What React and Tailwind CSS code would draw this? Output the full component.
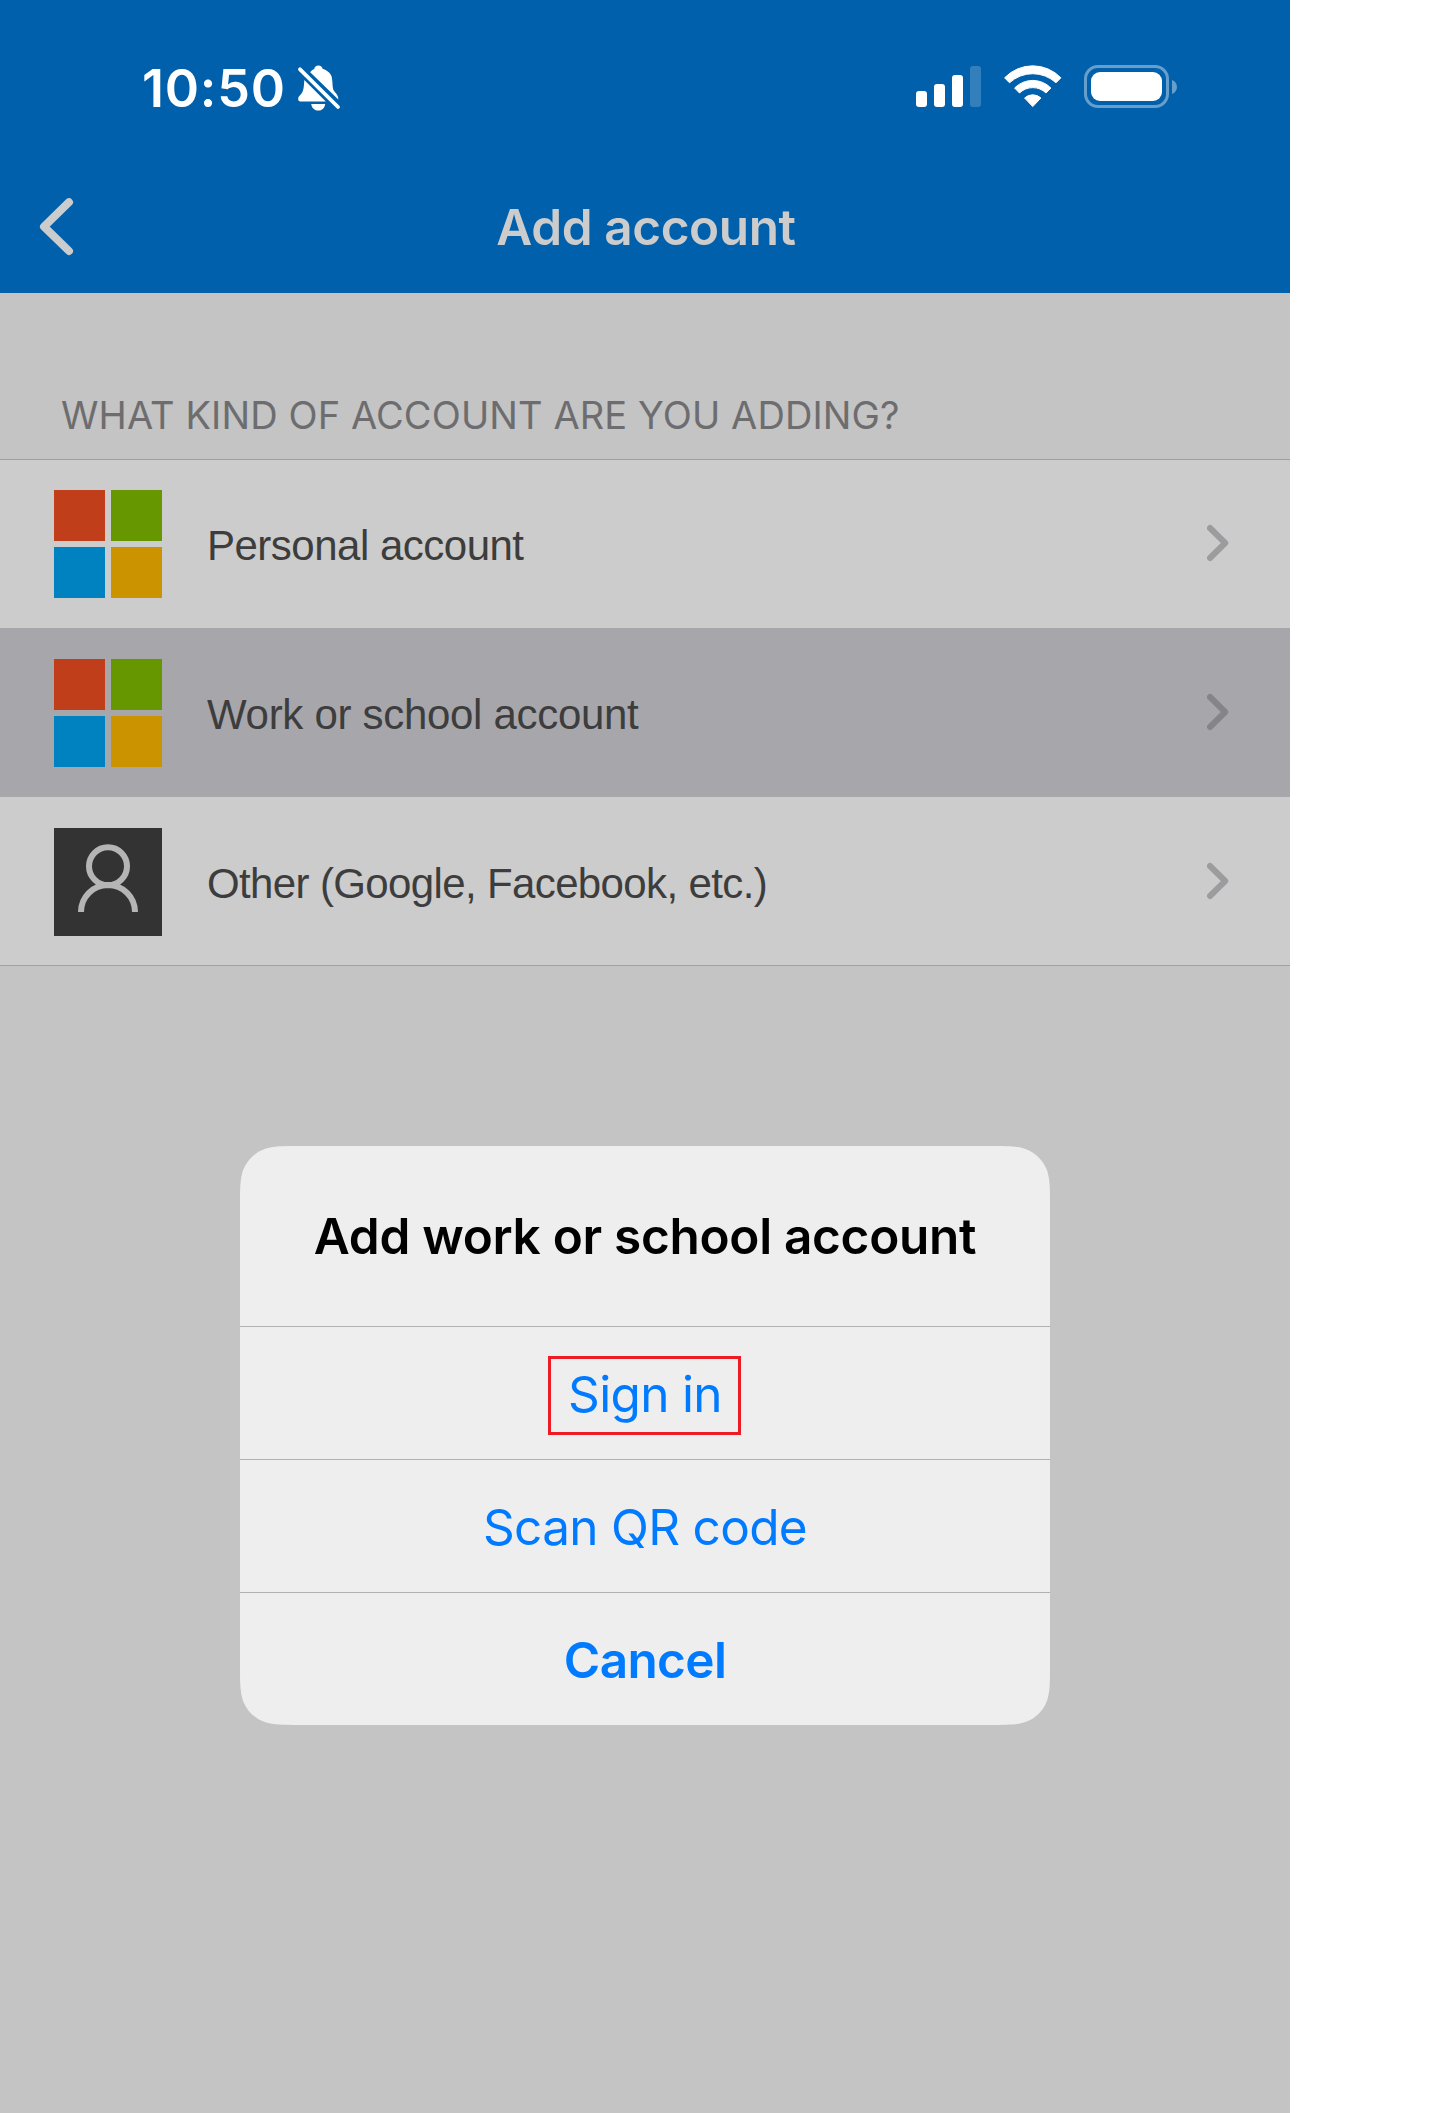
import React from "react";

const SILENT_BELL = (
  <svg className="ml-[11px] h-12 w-11" viewBox="0 0 44 48" fill="#fff">
    <path d="M13.2 8.2C14.4 6.6 15.8 5.6 17.3 5C17.5 2.8 19.1 1.4 21.4 1.4C23.7 1.4 25.3 2.8 25.6 4.8C29.3 6 32.2 8.1 33.8 10.8C35.7 14 35.2 19.5 36 24.5C36.6 28.5 41.6 29.6 41.3 35.6Z" />
    <path d="M7.3 16L28.8 37.6H3.4C1.9 37.6 1.2 36.6 1.2 35.1C1.2 31.6 4.6 31.2 6 26.6C7.1 23 7 19.6 7.3 16Z" />
    <path d="M14.2 40H28.2C27.6 44.2 25 46.6 21.3 46.6C17.5 46.6 14.8 44.2 14.2 40Z" />
    <path d="M3 5.3L41 43" stroke="#fff" strokeWidth="3.8" strokeLinecap="round" />
  </svg>
);

const WIFI = (
  <svg className="ml-[23px] h-[43px] w-[58px]" viewBox="0 0 58 43" fill="#fff">
    <g stroke="#fff" strokeWidth="1" strokeLinejoin="round">
      <path d="M.6 12.8A39.1 39.1 0 0 1 56.9 12.8L52 17.8A34.3 34.3 0 0 0 5.5 17.8Z" />
      <path d="M10.6 23A25.5 25.5 0 0 1 46.9 23L42 28A19 19 0 0 0 15.5 28Z" />
      <path d="M20.6 33A12 12 0 0 1 36.9 33L28.75 41.6Z" />
    </g>
  </svg>
);

function StatusBar() {
  return (
    <div className="flex h-[176px] items-center pr-[113px] pl-[142px] text-white">
      <span className="mt-[2px] font-['Inter',sans-serif] text-[52px] leading-[60px] font-semibold tracking-[0.78px]">10:50</span>
      {SILENT_BELL}
      <div className="mb-[3px] ml-auto flex h-[43px] items-start">
        <div className="flex h-[42px] items-end gap-[7px]">
          <div className="h-4 w-[11px] rounded-[3px] bg-white" />
          <div className="h-[23px] w-[11px] rounded-[3px] bg-white" />
          <div className="h-8 w-[11px] rounded-[3px] bg-white" />
          <div className="h-[41px] w-[11px] rounded-[3px] bg-white/20" />
        </div>
        {WIFI}
        <div className="ml-[22px] flex h-[43px] items-center gap-[3px]">
          <div className="h-[43px] w-[85px] rounded-[14px] border-3 border-white/40 p-1">
            <div className="h-full w-full rounded-[9px] bg-white" />
          </div>
          <svg className="h-[14px] w-[5px]" viewBox="0 0 5 14">
            <path d="M0 0C3 1 5 4 5 7S3 13 0 14Z" fill="#fff" fillOpacity=".4" />
          </svg>
        </div>
      </div>
    </div>
  );
}

function NavBar() {
  return (
    <div className="mb-[15px] grid h-[102px] grid-cols-[1fr_auto_1fr] items-center">
      <svg className="ml-9 h-[60px] w-10" viewBox="0 0 40 60" fill="none" stroke="#cccccc" strokeWidth="8" strokeLinecap="round" strokeLinejoin="round">
        <path d="M33 5.2L8 29.6L33 54" />
      </svg>
      <h1 className="ml-[2px] font-['Inter',sans-serif] text-[49.5px] leading-[60px] font-semibold tracking-[-0.41px] text-[#cccccc]">Add account</h1>
    </div>
  );
}

function MicrosoftLogo() {
  return (
    <div className="grid size-[108px] shrink-0 grid-cols-2 gap-[6px]">
      <div className="bg-[#c13e1b]" />
      <div className="bg-[#669600]" />
      <div className="bg-[#0082c1]" />
      <div className="bg-[#cc9300]" />
    </div>
  );
}

function PersonTile() {
  return (
    <svg className="size-[108px] shrink-0 bg-[#333333]" viewBox="0 0 108 108" fill="none" stroke="#b5b5b5" strokeWidth="6">
      <path d="M73 38.2A19 19 0 1 1 35 38.2A19 19 0 1 1 73 38.2ZM27 84A27 27 0 0 1 81 84" />
    </svg>
  );
}

function Row({ className, icon, labelClass, chevron, children }) {
  return (
    <div className={"flex items-center pr-[59px] pl-[54px] " + className}>
      {icon}
      <span className={"mt-[3px] ml-[45px] font-['Liberation_Sans',sans-serif] text-[42px] leading-[50px] text-[#3d3d3d] " + labelClass}>{children}</span>
      <svg className="mb-[2px] ml-auto h-10 w-6" viewBox="0 0 24 40" fill="none" stroke={chevron} strokeWidth="6" strokeLinecap="round" strokeLinejoin="round">
        <path d="M3 5L18.2 20L3 35" />
      </svg>
    </div>
  );
}

function Alert() {
  const action = "flex h-[133px] items-center justify-center border-t border-[#b0b0b0] pt-[2px] text-[#007aff]";
  return (
    <div
      className="mx-auto mt-[180px] h-[579px] w-[810px] bg-[#eeeeee] font-['Inter',sans-serif] text-[49.5px] leading-[60px] [clip-path:path('M59.6_0H750.4C767.5_0_776.1_0_785.4_2.9C795.5_6.6_803.4_14.5_807.1_24.6C810_33.9_810_42.5_810_59.6V519.4C810_536.5_810_545.1_807.1_554.4C803.4_564.5_795.5_572.4_785.4_576.1C776.1_579_767.5_579_750.4_579H59.6C42.5_579_33.9_579_24.6_576.1C14.5_572.4_6.6_564.5_2.9_554.4C0_545.1_0_536.5_0_519.4V59.6C0_42.5_0_33.9_2.9_24.6C6.6_14.5_14.5_6.6_24.6_2.9C33.9_0_42.5_0_59.6_0Z')]"
    >
      <h2 className="flex h-[180px] items-center justify-center font-semibold tracking-[-0.3px] text-black">Add work or school account</h2>
      <div className={action + " tracking-[-0.67px]"}>
        <span className="mt-[3px] mr-px flex h-[79px] w-[193px] items-center justify-center border-3 border-[#ed1c24] pb-[3px] pl-px">Sign in</span>
      </div>
      <div className={action + " tracking-[-0.69px]"}>Scan QR code</div>
      <div className={action + " font-semibold tracking-[-0.64px]"}>Cancel</div>
    </div>
  );
}

export default function App() {
  return (
    <div className="h-[2113px] w-full bg-white">
      <div className="flex h-full w-[1290px] flex-col bg-[#c4c4c4]">
        <header className="h-[293px] bg-[#0060ab]">
          <StatusBar />
          <NavBar />
        </header>
        <div className="flex h-[166px] items-end pb-5 pl-[61px] font-['Inter',sans-serif] text-[38px] leading-[48px] tracking-[0.11px] whitespace-nowrap text-[#6d6d6f]">
          WHAT KIND OF ACCOUNT ARE YOU ADDING?
        </div>
        <div className="border-y border-[#a0a0a1] bg-[#cccccc]">
          <Row className="h-[168px]" icon={<MicrosoftLogo />} labelClass="tracking-[-0.5px]" chevron="#9c9c9e">Personal account</Row>
          <Row className="h-[169px] border-t border-[#a7a6ab] bg-[#a7a6ab]" icon={<MicrosoftLogo />} labelClass="tracking-[-0.3px]" chevron="#858589">Work or school account</Row>
          <Row className="h-[168px] pt-[2px]" icon={<PersonTile />} labelClass="tracking-[-0.63px]" chevron="#9c9c9e">Other (Google, Facebook, etc.)</Row>
        </div>
        <Alert />
      </div>
    </div>
  );
}
